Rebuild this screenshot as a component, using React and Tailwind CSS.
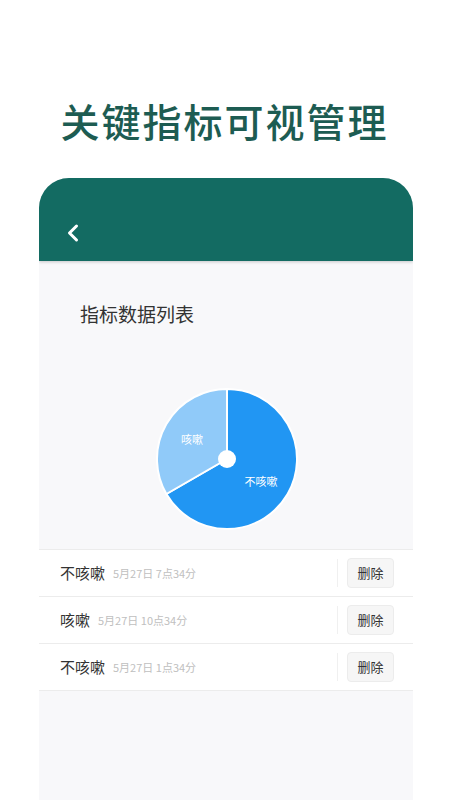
import { ChevronLeft } from 'lucide-react';

const rows = [
  { name: '不咳嗽', time: '5月27日 7点34分' },
  { name: '咳嗽', time: '5月27日 10点34分' },
  { name: '不咳嗽', time: '5月27日 1点34分' },
];

function Pie() {
  // center 70,70 r 70; dark 0..240deg clockwise from top
  const cx = 70, cy = 70, r = 70;
  const a = (240 * Math.PI) / 180;
  const x = cx + r * Math.sin(a);
  const y = cy - r * Math.cos(a);
  return (
    <svg width="142" height="142" viewBox="-1 -1 142 142">
      <path d={`M${cx} ${cy} L${cx} ${cy - r} A${r} ${r} 0 1 1 ${x} ${y} Z`} fill="#2196f3" stroke="#fff" strokeWidth="2" />
      <path d={`M${cx} ${cy} L${x} ${y} A${r} ${r} 0 0 1 ${cx} ${cy - r} Z`} fill="#90caf9" stroke="#fff" strokeWidth="2" />
      <circle cx={cx} cy={cy} r="9" fill="#fff" />
      <text x="35" y="55" fill="#fff" fontSize="11" textAnchor="middle">咳嗽</text>
      <text x="104" y="97" fill="#fff" fontSize="11" textAnchor="middle">不咳嗽</text>
    </svg>
  );
}

export default function App() {
  return (
    <div
      className="h-[800px] w-[449px] overflow-hidden bg-white"
      style={{ fontFamily: '"Noto Sans CJK SC", "Noto Sans", sans-serif' }}
    >
      <h1 className="pt-[90px] text-center text-[39px] font-medium leading-[60px] tracking-[2px] text-[#1d5c52]">
        关键指标可视管理
      </h1>
      <div className="ml-[39px] mr-[36px] mt-[28px] h-[622px] overflow-hidden rounded-t-[30px] bg-[#f8f8fa]">
        <div className="flex h-[83px] items-end bg-[#136b62] pb-[14px] pl-[20px] shadow-[0_1px_3px_rgba(0,0,0,0.2)]">
          <ChevronLeft className="h-[28px] w-[28px] text-white" strokeWidth={2.6} />
        </div>
        <div className="pl-[41px] pt-[39px] text-[19px] leading-[28px] text-[#333]">指标数据列表</div>
        <div className="flex justify-center pt-[60px] pl-[1px]">
          <Pie />
        </div>
        <div className="mt-[19px] border-t border-[#ececec]">
          {rows.map((r, i) => (
            <div key={i} className="flex h-[47px] items-center border-b border-[#ececec] bg-white pl-[21px] pr-[19px]">
              <span className="text-[15px] text-[#333]">{r.name}</span>
              <span className="ml-[8px] text-[11px] text-[#c0c0c0]">{r.time}</span>
              <div className="ml-auto h-[28px] w-px bg-[#f0f0f0]" />
              <button className="ml-[9px] h-[30px] w-[47px] rounded-[4px] border border-[#ececec] bg-[#f6f6f6] text-[13px] text-[#333]">
                删除
              </button>
            </div>
          ))}
        </div>
      </div>
    </div>
  );
}
